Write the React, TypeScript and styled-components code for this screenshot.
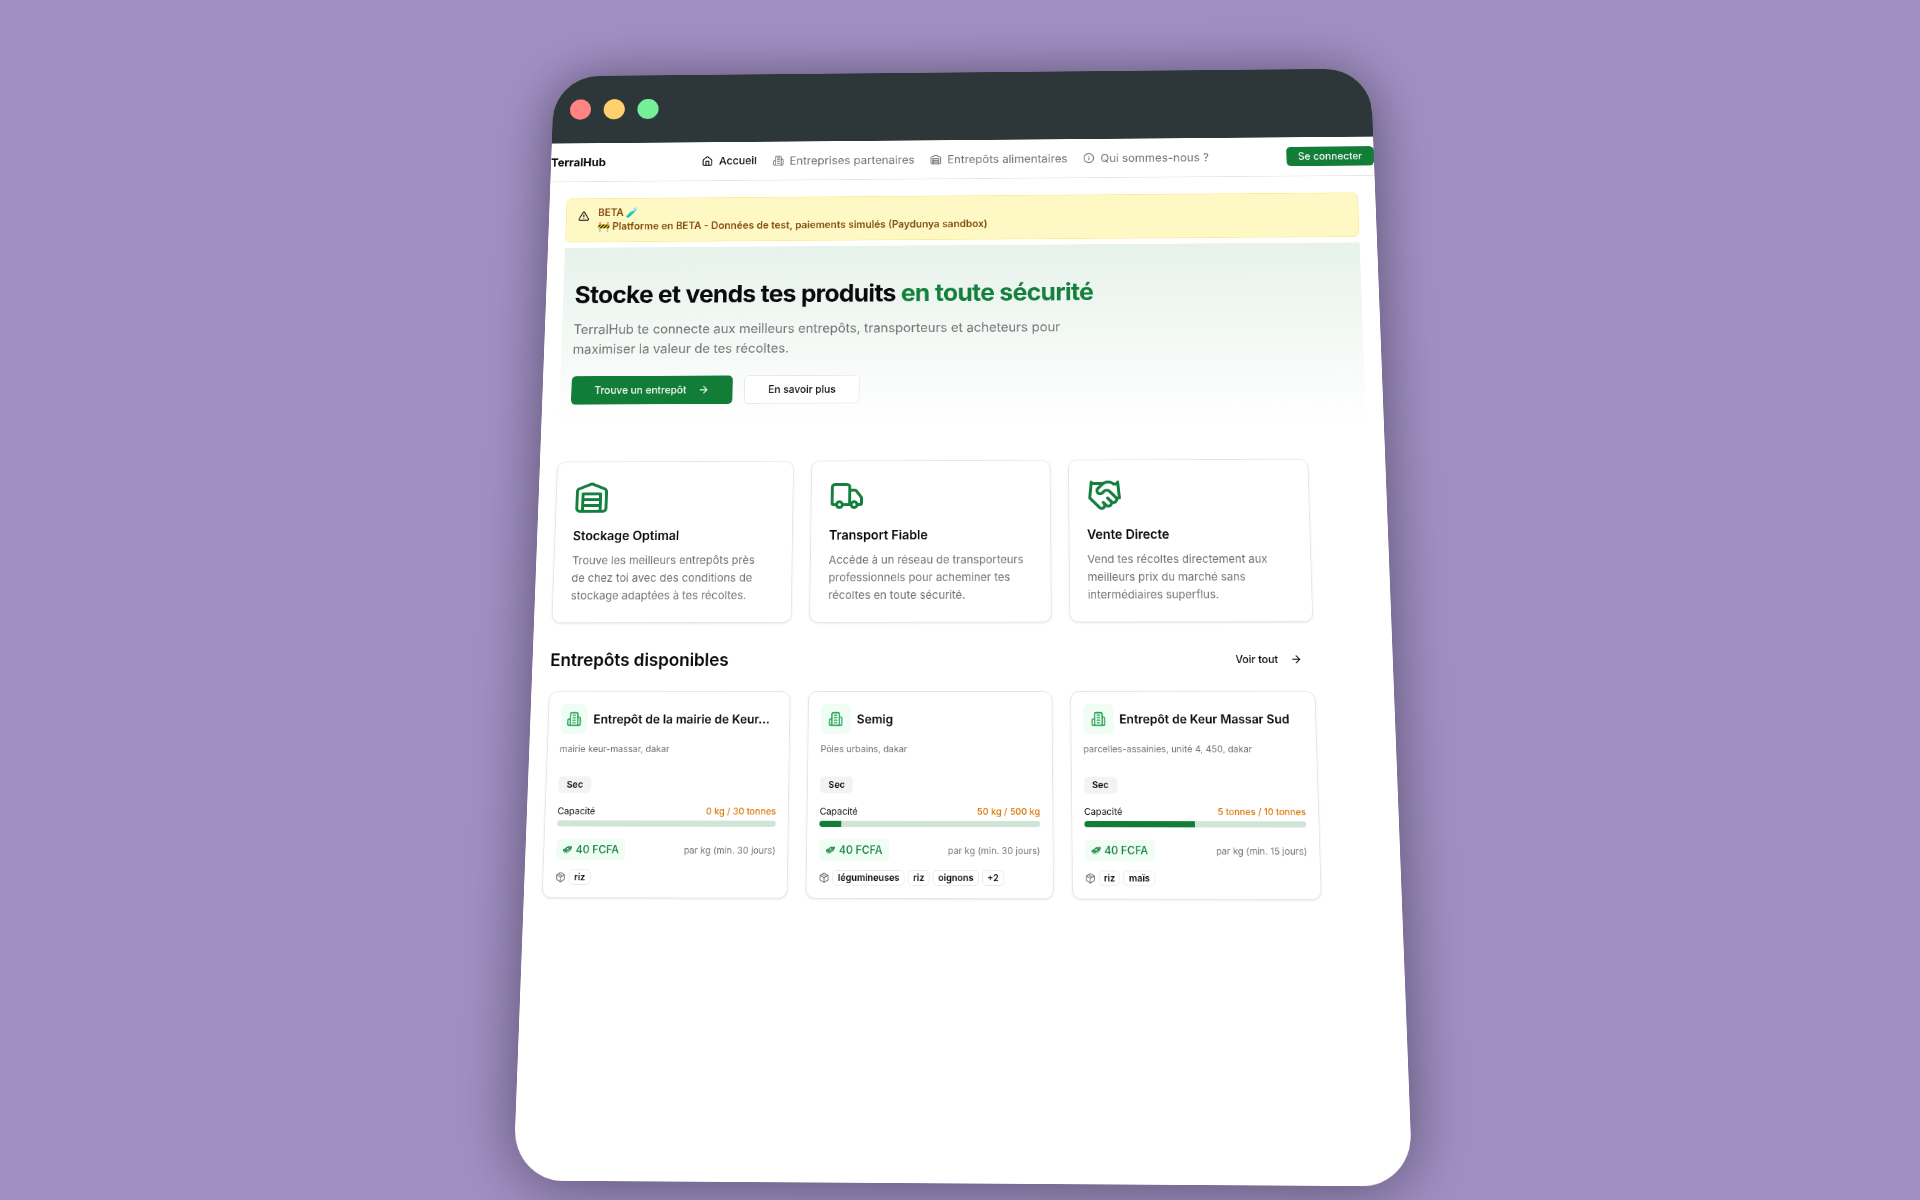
import React from "react";
import styled, { createGlobalStyle } from "styled-components";
import { ArrowRight, Handshake, House, Info, Package, TriangleAlert, Truck } from "lucide-react";

const GlobalStyle = createGlobalStyle`
  *, *::before, *::after { box-sizing: border-box; }
  body {
    margin: 0;
    background: #a18fc4;
    font-family: Inter, "Liberation Sans", sans-serif;
    color: #0a0a0a;
  }
  h1, h2, h3, p, ul { margin: 0; padding: 0; }
  button { font-family: inherit; cursor: pointer; }
`;

type IconProps = { size: number };

const strokeProps = {
  viewBox: "0 0 24 24",
  fill: "none",
  stroke: "currentColor",
  strokeWidth: 2,
  strokeLinecap: "round" as const,
  strokeLinejoin: "round" as const,
  "aria-hidden": true,
};

const WarehouseIcon = ({ size }: IconProps) => (
  <svg width={size} height={size} {...strokeProps}>
    <path d="M22 8.35V20a2 2 0 0 1-2 2H4a2 2 0 0 1-2-2V8.35A2 2 0 0 1 3.26 6.5l8-3.2a2 2 0 0 1 1.48 0l8 3.2A2 2 0 0 1 22 8.35Z" />
    <path d="M6 18h12" />
    <path d="M6 14h12" />
    <rect width="12" height="12" x="6" y="10" />
  </svg>
);

const BuildingIcon = ({ size }: IconProps) => (
  <svg width={size} height={size} {...strokeProps}>
    <path d="M6 22V4a2 2 0 0 1 2-2h8a2 2 0 0 1 2 2v18Z" />
    <path d="M6 12H4a2 2 0 0 0-2 2v6a2 2 0 0 0 2 2h2" />
    <path d="M18 9h2a2 2 0 0 1 2 2v9a2 2 0 0 1-2 2h-2" />
    <path d="M10 6h4M10 10h4M10 14h4M10 18h4" />
  </svg>
);

const MoneyIcon = ({ size }: IconProps) => (
  <svg width={size} height={size} viewBox="0 0 24 24" fill="none" stroke="currentColor" strokeWidth="2" strokeLinejoin="round" aria-hidden>
    <path d="M1 12c5 0 8-7 14-8 2 1 4 1 8 0l-1 6c-6 1-8 6-14 7-2-1-4-1-7-1Z" fill="currentColor" fillOpacity="0.8" />
    <path d="M3 20c3-1 5 0 7 0 5-1 7-6 12-7" />
    <circle cx="12" cy="10" r="2" fill="#f0fdf4" stroke="none" />
  </svg>
);

const Stage = styled.div`
  display: grid;
  place-content: center;
  height: 100vh;
  overflow: hidden;
`;

const Window = styled.div`
  width: 60vw;
  min-height: 125vh;
  border-radius: 64px;
  overflow: hidden;
  background: #fff;
  box-shadow: 0 4px 80px rgba(0, 0, 0, 0.45);
  transform: translateY(1px) perspective(1200px) rotateX(6deg) rotateY(-1deg) scale(0.743);
`;

const TitleBar = styled.div`
  display: flex;
  align-items: center;
  gap: 18px;
  height: 100px;
  padding: 0 24px;
  background: #2d3739;
`;

const Dot = styled.span<{ $color: string }>`
  width: 30px;
  height: 30px;
  border-radius: 50%;
  background: ${(p) => p.$color};
`;

const TopNav = styled.header`
  display: flex;
  align-items: center;
  justify-content: space-between;
  height: 57px;
  border-bottom: 1px solid #e5e5e5;
`;

const Logo = styled.a`
  padding-right: 28px;
  font-size: 16px;
  font-weight: 700;
  color: inherit;
  text-decoration: none;
`;

const NavLinks = styled.nav`
  display: flex;
  gap: 22px;
`;

const NavLink = styled.a<{ $active?: boolean }>`
  display: flex;
  align-items: center;
  gap: 8px;
  font-size: ${(p) => (p.$active ? 15 : 16)}px;
  line-height: 20px;
  font-weight: ${(p) => (p.$active ? 500 : 400)};
  color: ${(p) => (p.$active ? "#0a0a0a" : "#737373")};
  text-decoration: none;
`;

const Button = styled.button<{ $variant?: "primary" | "outline" | "ghost"; $size?: "sm" | "md" | "lg" }>`
  display: inline-flex;
  align-items: center;
  gap: 16px;
  height: ${(p) => (p.$size === "lg" ? 40 : p.$size === "md" ? 36 : 28)}px;
  padding: 0 ${(p) => (p.$size === "lg" ? 32 : 16)}px;
  border: ${(p) => (p.$variant === "outline" ? "1px solid #e5e5e5" : "0")};
  border-radius: 6px;
  background: ${(p) => (p.$variant === "primary" ? "#117d37" : p.$variant === "outline" ? "#fff" : "transparent")};
  color: ${(p) => (p.$variant === "primary" ? "#fafafa" : "#0a0a0a")};
  font-size: 14px;
  line-height: 20px;
  font-weight: 500;
  white-space: nowrap;
`;

const Main = styled.main`
  padding: 24px;
`;

const Alert = styled.div`
  display: flex;
  gap: 12px;
  padding: 10px 16px 12px;
  border: 1px solid #fbec8f;
  border-radius: 8px;
  background: #fef8c5;
  font-size: 14px;
  line-height: 20px;
  font-weight: 600;
  color: #854d0e;

  svg { margin-top: 7px; color: #0a0a0a; }
`;

const Hero = styled.section`
  margin: 8px 0 48px;
  padding: 48px 16px 32px;
  background: linear-gradient(#e7f2eb, #ffffff);
`;

const HeroTitle = styled.h1`
  font-size: 34px;
  line-height: 40px;
  font-weight: 700;
  letter-spacing: -0.025em;

  span { color: #15803d; }
`;

const HeroText = styled.p`
  max-width: 700px;
  margin-top: 16px;
  font-size: 18px;
  line-height: 28px;
  color: #737373;
`;

const Actions = styled.div`
  display: flex;
  gap: 16px;
  margin-top: 24px;
`;

const Section = styled.section`
  max-width: 1024px;
  margin-top: 32px;
`;

const CardGrid = styled.div`
  display: grid;
  grid-template-columns: repeat(3, 1fr);
  gap: 24px;
`;

const Card = styled.article<{ $pad: number }>`
  min-width: 0;
  padding: ${(p) => p.$pad}px;
  border: 1px solid #e5e5e5;
  border-radius: 12px;
  background: #fff;
  box-shadow: 0 1px 3px rgba(0, 0, 0, 0.1);
`;

const FeatureIcon = styled.div`
  height: 48px;
  margin-bottom: 16px;
  color: #15803d;
`;

const FeatureTitle = styled.h3`
  font-size: 17px;
  line-height: 28px;
  font-weight: 600;
`;

const FeatureText = styled.p`
  max-width: 270px;
  margin-top: 8px;
  font-size: 15px;
  line-height: 24px;
  color: #737373;
`;

const SectionHead = styled.div`
  display: flex;
  align-items: center;
  justify-content: space-between;
  margin-bottom: 24px;
`;

const SectionTitle = styled.h2`
  font-size: 23px;
  line-height: 32px;
  font-weight: 600;
`;

const DepotHead = styled.div`
  display: flex;
  align-items: center;
  gap: 8px;
`;

const DepotIcon = styled.span<{ $compact?: boolean }>`
  display: grid;
  place-items: center;
  flex: none;
  width: ${(p) => (p.$compact ? 36 : 40)}px;
  height: 40px;
  border-radius: 8px;
  background: #f0fdf4;
  color: #22a355;
`;

const DepotName = styled.h3`
  font-size: 16px;
  line-height: 24px;
  font-weight: 600;
  white-space: nowrap;
`;

const Place = styled.p`
  margin: 12px 0 28px;
  font-size: 12px;
  line-height: 16px;
  color: #737373;
`;

const TypeBadge = styled.span`
  display: block;
  width: fit-content;
  padding: 3px 11px;
  border-radius: 6px;
  background: #f3f3f3;
  font-size: 12px;
  line-height: 16px;
  font-weight: 600;
`;

const CapacityRow = styled.div`
  display: flex;
  justify-content: space-between;
  margin: 16px 0 4px;
  font-size: 12px;
  line-height: 16px;

  strong { font-weight: 500; color: #d9780a; }
`;

const Track = styled.div`
  height: 8px;
  border-radius: 4px;
  overflow: hidden;
  background: #d0e5d7;
`;

const Fill = styled.div`
  height: 100%;
  background: #117d37;
`;

const PriceRow = styled.div`
  display: flex;
  align-items: center;
  justify-content: space-between;
  margin: 16px 0 12px;
  font-size: 12px;
  color: #737373;
`;

const Price = styled.span`
  display: flex;
  align-items: center;
  gap: 5px;
  padding: 4px 9px;
  border-radius: 6px;
  background: #f0fdf4;
  font-size: 14px;
  line-height: 20px;
  font-weight: 500;
  color: #16803d;
`;

const TagRow = styled.div`
  display: flex;
  align-items: center;
  gap: 4px;
  color: #737373;
`;

const Tag = styled.span`
  padding: 1px 6px;
  border: 1px solid #e9e9e9;
  border-radius: 6px;
  font-size: 12px;
  line-height: 16px;
  font-weight: 600;
  color: #0a0a0a;
`;

const links = [
  { label: "Accueil", icon: <House size={16} />, active: true },
  { label: "Entreprises partenaires", icon: <BuildingIcon size={16} /> },
  { label: "Entrepôts alimentaires", icon: <WarehouseIcon size={16} /> },
  { label: "Qui sommes-nous ?", icon: <Info size={16} /> },
];

const features = [
  {
    title: "Stockage Optimal",
    icon: <WarehouseIcon size={48} />,
    text: "Trouve les meilleurs entrepôts près de chez toi avec des conditions de stockage adaptées à tes récoltes.",
  },
  {
    title: "Transport Fiable",
    icon: <Truck size={48} />,
    text: "Accéde à un réseau de transporteurs professionnels pour acheminer tes récoltes en toute sécurité.",
  },
  {
    title: "Vente Directe",
    icon: <Handshake size={48} />,
    text: "Vend tes récoltes directement aux meilleurs prix du marché sans intermédiaires superflus.",
  },
];

const depots = [
  {
    name: "Entrepôt de la mairie de Keur...",
    place: "mairie keur-massar, dakar",
    capacity: "0 kg / 30 tonnes",
    used: 0,
    days: 30,
    tags: ["riz"],
    compact: true,
  },
  {
    name: "Semig",
    place: "Pôles urbains, dakar",
    capacity: "50 kg / 500 kg",
    used: 10,
    days: 30,
    tags: ["légumineuses", "riz", "oignons", "+2"],
  },
  {
    name: "Entrepôt de Keur Massar Sud",
    place: "parcelles-assainies, unité 4, 450, dakar",
    capacity: "5 tonnes / 10 tonnes",
    used: 50,
    days: 15,
    tags: ["riz", "maïs"],
  },
];

export default function App() {
  return (
    <>
      <GlobalStyle />
      <Stage>
        <Window>
          <TitleBar>
            <Dot $color="#ff8383" />
            <Dot $color="#ffd06e" />
            <Dot $color="#76f098" />
          </TitleBar>
          <TopNav>
            <Logo href="#">TerralHub</Logo>
            <NavLinks>
              {links.map((link) => (
                <NavLink key={link.label} href="#" $active={link.active}>
                  {link.icon}
                  {link.label}
                </NavLink>
              ))}
            </NavLinks>
            <Button $variant="primary" $size="sm">Se connecter</Button>
          </TopNav>
          <Main>
            <Alert role="alert">
              <TriangleAlert size={16} />
              <div>
                <p>BETA 🧪</p>
                <p>🚧 Platforme en BETA - Données de test, paiements simulés (Paydunya sandbox)</p>
              </div>
            </Alert>
            <Hero>
              <HeroTitle>
                Stocke et vends tes produits <span>en toute sécurité</span>
              </HeroTitle>
              <HeroText>
                TerralHub te connecte aux meilleurs entrepôts, transporteurs et acheteurs pour maximiser la valeur de
                tes récoltes.
              </HeroText>
              <Actions>
                <Button $variant="primary" $size="lg">
                  Trouve un entrepôt
                  <ArrowRight size={16} />
                </Button>
                <Button $variant="outline" $size="lg">En savoir plus</Button>
              </Actions>
            </Hero>
            <Section>
              <CardGrid>
                {features.map((feature) => (
                  <Card key={feature.title} $pad={24}>
                    <FeatureIcon>{feature.icon}</FeatureIcon>
                    <FeatureTitle>{feature.title}</FeatureTitle>
                    <FeatureText>{feature.text}</FeatureText>
                  </Card>
                ))}
              </CardGrid>
            </Section>
            <Section>
              <SectionHead>
                <SectionTitle>Entrepôts disponibles</SectionTitle>
                <Button $variant="ghost" $size="md">
                  Voir tout
                  <ArrowRight size={16} />
                </Button>
              </SectionHead>
              <CardGrid>
                {depots.map((depot) => (
                  <Card key={depot.name} $pad={16}>
                    <DepotHead>
                      <DepotIcon $compact={depot.compact}>
                        <BuildingIcon size={20} />
                      </DepotIcon>
                      <DepotName>{depot.name}</DepotName>
                    </DepotHead>
                    <Place>{depot.place}</Place>
                    <TypeBadge>Sec</TypeBadge>
                    <CapacityRow>
                      <span>Capacité</span>
                      <strong>{depot.capacity}</strong>
                    </CapacityRow>
                    <Track>
                      <Fill style={{ width: `${depot.used}%` }} />
                    </Track>
                    <PriceRow>
                      <Price>
                        <MoneyIcon size={12} />
                        40 FCFA
                      </Price>
                      <span>par kg (min. {depot.days} jours)</span>
                    </PriceRow>
                    <TagRow>
                      <Package size={14} />
                      {depot.tags.map((tag) => (
                        <Tag key={tag}>{tag}</Tag>
                      ))}
                    </TagRow>
                  </Card>
                ))}
              </CardGrid>
            </Section>
          </Main>
        </Window>
      </Stage>
    </>
  );
}
